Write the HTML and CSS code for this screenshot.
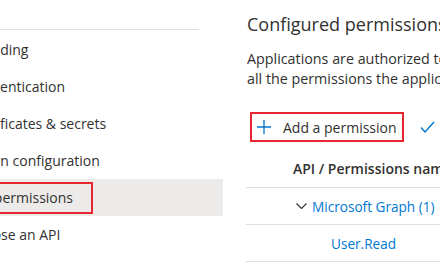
FILE: index.html
```html
<!DOCTYPE html>
<html lang="en">
<head>
<meta charset="utf-8">
<title>API permissions</title>
<link rel="stylesheet" href="styles.css">
</head>
<body>
<div class="page">
  <nav class="sidebar">
    <div class="sep"></div>
    <ul class="nav">
      <li><span class="label">Branding</span></li>
      <li><span class="label">Authentication</span></li>
      <li><span class="label">Certificates &amp; secrets</span></li>
      <li><span class="label">Token configuration</span></li>
      <li class="active"><span class="label">API permissions</span><span class="focus-ring"></span></li>
      <li><span class="label">Expose an API</span></li>
    </ul>
  </nav>
  <main class="content">
    <h2 class="title">Configured permissions</h2>
    <p class="desc">
      <span class="line">Applications are authorized to call APIs when they are granted permissions by users/admins as part of the consent process. The list of configured permissions should include</span>
      <span class="line">all the permissions the application needs. Learn more about permissions and consent</span>
    </p>
    <div class="toolbar">
      <button class="btn add">
        <svg class="icon" width="14" height="14" viewBox="0 0 14 14"><path d="M7 0v14M0 7h14" stroke="#0078d4" stroke-width="1.3" fill="none"/></svg>
        <span>Add a permission</span>
      </button>
      <button class="btn grant">
        <svg class="icon" width="15" height="12" viewBox="0 0 15 12"><path d="M1 6.5l4 4.5L14 1" stroke="#0078d4" stroke-width="1.4" fill="none"/></svg>
        <span>Grant admin consent for Default Directory</span>
      </button>
    </div>
    <div class="table">
      <div class="row head"><div class="cell name">API / Permissions name</div><div class="cell">Type</div><div class="cell">Description</div></div>
      <div class="row group"><div class="cell name"><svg class="chev" width="11" height="6" viewBox="0 0 11 6"><path d="M0.5 0.5l5 5 5-5" stroke="#323130" fill="none" stroke-width="1.1"/></svg><a class="link">Microsoft Graph (1)</a></div><div class="cell"></div><div class="cell"></div></div>
      <div class="row item"><div class="cell name"><a class="link">User.Read</a></div><div class="cell">Delegated</div><div class="cell">Sign in and read user profile</div></div>
    </div>
  </main>
</div>
</body>
</html>
```

FILE: styles.css
```css
html, body {
  margin: 0;
  padding: 0;
  width: 440px;
  height: 264px;
  overflow: hidden;
  background: #ffffff;
  font-family: "Open Sans", "Noto Sans", sans-serif;
  color: #323130;
}

.page {
  display: flex;
  height: 264px;
}

.sidebar {
  flex: 0 0 254px;
  margin-left: -31px;
}

.sep {
  height: 1px;
  width: 230px;
  background: #e1dfdd;
  margin-top: 29px;
}

.nav {
  list-style: none;
  margin: 1px 0 0;
  padding: 0;
}

.nav li {
  position: relative;
  height: 37px;
  display: flex;
  align-items: center;
  font-size: 14px;
  white-space: nowrap;
}

.nav li.active {
  background: #edebe9;
}

.focus-ring {
  position: absolute;
  top: 3px;
  bottom: 2px;
  left: -6px;
  width: 130px;
  box-sizing: border-box;
  border: 2px solid #e8262f;
}

.content {
  flex: 1 1 auto;
  min-width: 0;
  padding-left: 24px;
  white-space: nowrap;
}

.title {
  margin: 12px 0 0;
  font-size: 18px;
  font-weight: 400;
  line-height: 24px;
}

.desc {
  margin: 13px 0 0;
  font-size: 14.3px;
  line-height: 20px;
}

.desc .line {
  display: block;
}

.toolbar {
  display: flex;
  align-items: center;
  margin: 23px 0 0 3px;
}

.btn {
  display: flex;
  align-items: center;
  box-sizing: border-box;
  height: 30px;
  background: transparent;
  font-family: inherit;
  font-size: 14px;
  color: #323130;
  border: 2px solid transparent;
  padding: 0 5px;
  gap: 12px;
  white-space: nowrap;
}

.btn.add {
  width: 157px;
  border-color: #e8262f;
}

.btn.grant {
  margin-left: 9px;
  gap: 8px;
}

.icon {
  flex: none;
}

.table {
  margin: 8px 0 0 -1px;
}

.row {
  display: grid;
  grid-template-columns: 260px 120px 240px;
  height: 36px;
  border-bottom: 1px solid #e1dfdd;
  align-items: center;
  font-size: 13.6px;
}

.row.head {
  height: 37px;
  font-size: 14px;
  font-weight: 600;
}

.row.head .name {
  padding-left: 47px;
}

.row.group .name {
  display: flex;
  align-items: center;
  gap: 5px;
  padding-left: 50px;
}

.row.item .name {
  padding-left: 85px;
}

.chev {
  flex: none;
}

.link {
  color: #0078d4;
  text-decoration: none;
}
```
